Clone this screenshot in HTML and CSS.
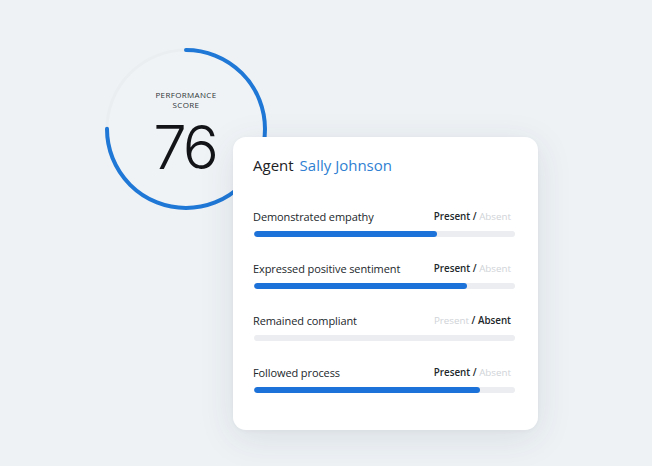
FILE: index.html
```html
<!DOCTYPE html>
<html lang="en">
<head>
<meta charset="utf-8">
<link rel="stylesheet" href="styles.css">
</head>
<body>
<div class="stage">
  <div class="gauge">
    <svg class="gauge-ring" width="162" height="162" viewBox="0 0 162 162">
      <circle cx="81" cy="81" r="79" fill="#f0f3f6" stroke="#eaeef1" stroke-width="3"/>
      <circle cx="81" cy="81" r="79" fill="none" stroke="#1f77d6" stroke-width="4" stroke-linecap="round" stroke-dasharray="372 500" transform="rotate(-90 81 81)"/>
    </svg>
    <div class="gauge-text">
      <div class="gauge-label">PERFORMANCE<br>SCORE</div>
      <div class="gauge-value">76</div>
    </div>
  </div>
  <div class="card">
    <div class="card-head"><span class="agent">Agent</span><span class="agent-name">Sally Johnson</span></div>
    <div class="rows">
      <div class="row">
        <div class="row-top"><span class="row-label">Demonstrated empathy</span><span class="status"><b class="on">Present</b> / <b class="off">Absent</b></span></div>
        <div class="track"><div class="fill" style="width:70%"></div></div>
      </div>
      <div class="row">
        <div class="row-top"><span class="row-label">Expressed positive sentiment</span><span class="status"><b class="on">Present</b> / <b class="off">Absent</b></span></div>
        <div class="track"><div class="fill" style="width:81.5%"></div></div>
      </div>
      <div class="row">
        <div class="row-top"><span class="row-label">Remained compliant</span><span class="status"><b class="off">Present</b> / <b class="on">Absent</b></span></div>
        <div class="track"></div>
      </div>
      <div class="row">
        <div class="row-top"><span class="row-label">Followed process</span><span class="status"><b class="on">Present</b> / <b class="off">Absent</b></span></div>
        <div class="track"><div class="fill" style="width:86.5%"></div></div>
      </div>
    </div>
  </div>
</div>
</body>
</html>
```
FILE: styles.css
```css
html, body {
  margin: 0;
  padding: 0;
}
body {
  background: #eef2f5;
  font-family: "Open Sans", "Noto Sans", sans-serif;
  color: #1d2124;
  width: 652px;
  height: 466px;
  overflow: hidden;
}
.stage {
  padding: 48px 0 0 105px;
}
.gauge {
  display: grid;
  width: 162px;
  height: 162px;
}
.gauge-ring, .gauge-text {
  grid-area: 1 / 1;
}
.gauge-ring {
  display: block;
}
.gauge-text {
  display: flex;
  flex-direction: column;
  align-items: center;
  padding-top: 42px;
}
.gauge-label {
  font-size: 8px;
  line-height: 10px;
  letter-spacing: 0.35px;
  text-align: center;
  color: #2e3337;
  font-weight: 500;
}
.gauge-value {
  font-family: "Inter", "Open Sans", sans-serif;
  font-weight: 300;
  font-size: 60px;
  line-height: 60px;
  letter-spacing: -3px;
  margin-top: 7px;
  margin-left: -3px;
  color: #121417;
}
.card {
  position: relative;
  margin: -73px 0 0 128px;
  width: 305px;
  height: 293px;
  box-sizing: border-box;
  background: #ffffff;
  border-radius: 13px;
  box-shadow: 0 8px 36px rgba(40, 60, 80, 0.10), 0 1px 4px rgba(40, 60, 80, 0.04);
  padding: 18px 23px 0 20px;
}
.card-head {
  font-size: 15px;
  line-height: 20px;
  display: flex;
  gap: 6px;
}
.agent {
  color: #1d2124;
}
.agent-name {
  color: #2f80d2;
}
.rows {
  margin-top: 33px;
  display: flex;
  flex-direction: column;
  gap: 23px;
}
.row-top {
  display: flex;
  justify-content: space-between;
  align-items: center;
  height: 16px;
  padding-right: 4px;
}
.row-label {
  font-size: 11px;
  letter-spacing: -0.1px;
  color: #22272b;
}
.status {
  font-size: 9.8px;
  color: #22272b;
  font-weight: 600;
}
.status b {
  font-weight: 600;
}
.status .off {
  color: #cfd3d7;
  font-weight: 400;
}
.track {
  margin-top: 7px;
  margin-left: 1px;
  height: 6px;
  border-radius: 3px;
  background: #ebedf0;
  overflow: hidden;
}
.fill {
  height: 100%;
  border-radius: 3px;
  background: #1c72d9;
}
```
